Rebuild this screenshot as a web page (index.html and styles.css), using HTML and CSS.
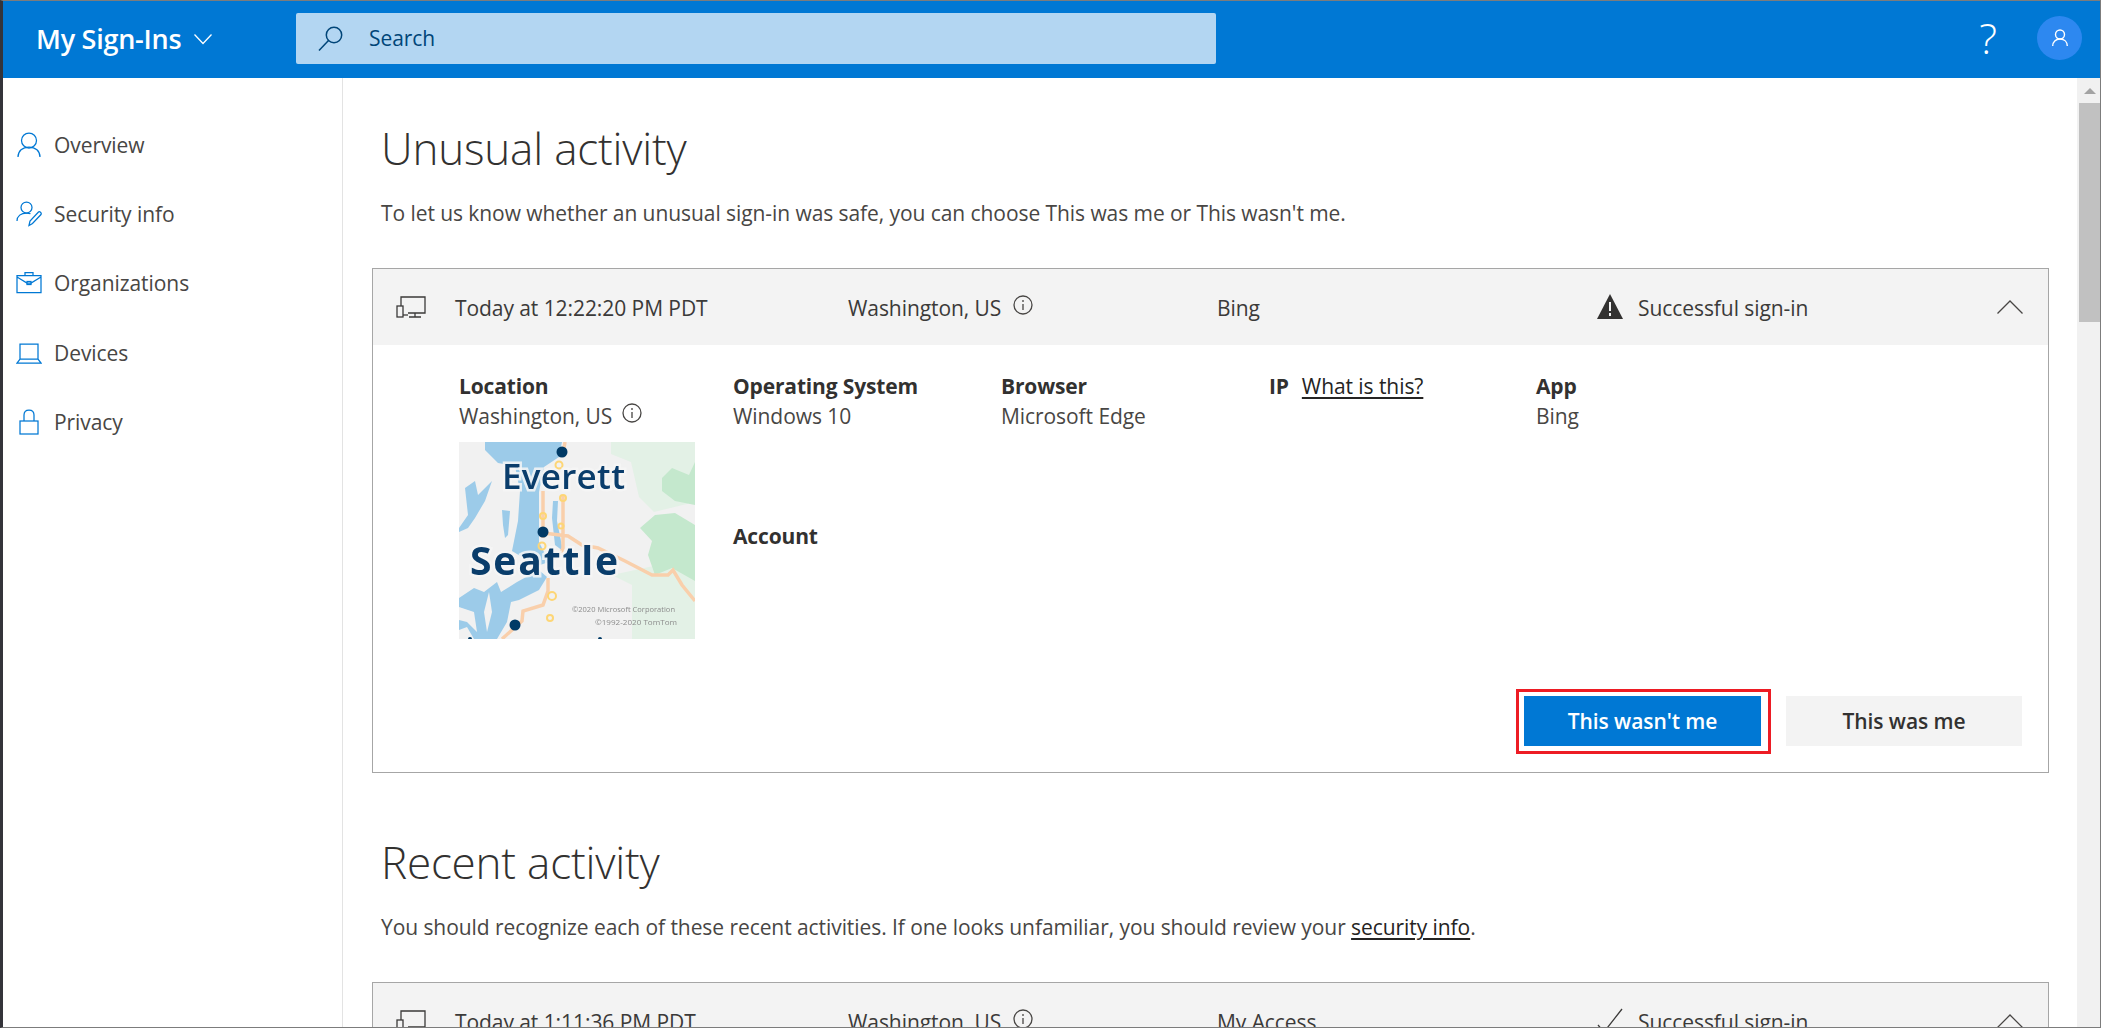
FILE: index.html
```html
<!DOCTYPE html>
<html lang="en">
<head>
<meta charset="utf-8">
<title>My Sign-Ins</title>
<link rel="stylesheet" href="styles.css">
</head>
<body>
<div class="frame">
  <header class="topbar">
    <div class="brand">My Sign-Ins
      <svg class="brand-chev" viewBox="0 0 18 11"><path d="M.5.5 9 9.500 17.500.5"/></svg>
    </div>
    <div class="search">
      <svg class="search-icon" viewBox="0 0 25 25"><circle cx="16" cy="9" r="7.700"/><path d="M10.500 14.500 1 24.500"/></svg>
      <span>Search</span>
    </div>
    <div class="help">?</div>
    <div class="avatar"><svg viewBox="0 0 16 18"><circle cx="8" cy="5.500" r="4.500"/><path d="M.7 17c0-4.200 3-7 7.300-7s7.300 2.800 7.300 7"/></svg></div>
  </header>
  <div class="body">
    <nav class="sidebar">
      <a class="nav-item"><svg viewBox="0 0 26 26"><circle cx="13" cy="8.500" r="7.500"/><path d="M2 25c0-6 4.500-10 11-10s11 4 11 10"/></svg>Overview</a>
      <a class="nav-item"><svg viewBox="0 0 26 26"><circle cx="10.500" cy="6.500" r="5.500"/><path d="M1 20c0-5 4-8 9.500-8 1.500 0 3 .3 4 .8"/><path d="M13 24.500l1-4.500 8.500-9c1-1 3.500 1 2.500 2.500l-8.500 9z"/></svg>Security info</a>
      <a class="nav-item"><svg viewBox="0 0 26 26"><path d="M1 5.500h24v17H1zM9 5.500v-3h8v3M1 7l10 6h4l10-6"/><rect x="11" y="11.500" width="4" height="3"/></svg>Organizations</a>
      <a class="nav-item"><svg viewBox="0 0 26 26"><path d="M4 19V4h18v15M1 23l3-4h18l3 4z"/></svg>Devices</a>
      <a class="nav-item"><svg viewBox="0 0 26 26"><rect x="4" y="12" width="18" height="13"/><path d="M8 12V6c0-3 2-5 5-5s5 2 5 5v6"/></svg>Privacy</a>
    </nav>
    <main class="content">
      <section class="block">
        <h1 class="title">Unusual activity</h1>
        <p class="lead">To let us know whether an unusual sign-in was safe, you can choose This was me or This wasn't me.</p>
        <article class="card">
          <div class="card-head">
            <svg class="device" viewBox="0 0 30 22"><path d="M5 10V1h24v16H12M19 17v4M13 21h12"/><rect x="1" y="10" width="6" height="11"/><path d="M7 19h5"/></svg>
            <span>Today at 12:22:20 PM PDT</span>
            <span class="loc">Washington, US <svg class="info" viewBox="0 0 20 20"><circle cx="10" cy="10" r="9"/><path d="M10 9v6M10 5v2"/></svg></span>
            <span>Bing</span>
            <span class="status"><svg class="warn" viewBox="0 0 26 25"><path d="M13 0 26 25H0z"/><path class="warn-mark" d="M13 8v9M13 19v3"/></svg>Successful sign-in</span>
            <svg class="chev" viewBox="0 0 26 14"><path d="M.5 13.500 13 1l12.500 12.500"/></svg>
          </div>
          <div class="details">
            <div class="loc-col">
              <div class="label">Location</div>
              <div class="value">Washington, US <svg class="info" viewBox="0 0 20 20"><circle cx="10" cy="10" r="9"/><path d="M10 9v6M10 5v2"/></svg></div>
              <svg class="map" viewBox="0 0 236 197">
                <rect width="236" height="197" fill="#f1f1f1"/>
                <g class="map-art">
                  <path fill="#e3f1e6" d="M152 0h84v60l-41 10-15-15-8-35-20-8zM153 133l20 10v54h63v-82z"/>
                  <path fill="#c4e8cd" d="M203 36l10-10 17 7 6-13v43l-20-4-13-10zM181 86l15-13 20-2 20 12v56l-23-13-17 7-7-20 4-14z"/>
                  <path fill="#9ccbe9" d="M26 0h77l-3 15-15 10-5 25v50l10 20-12 4-25-15 6-30 2-30-5-25-17-3-13-13zM0 86l9-13-3-27 10-7 3 14 14-14-7 20-10 17-7 10-9 4zM43 68l8 1-2 24-3 3-2-13zM94 59h5l-1 20 6 30-8-6-3-27zM0 156l15-10 10 4 13-10 4 10 16-10 22-12 8 7-8 13-20 10-8 2-4 20-10 17H15l-7-12-8 3z"/>
                  <path fill="#f1f1f1" d="M30 150l3 20-5 20-3-20zM0 165l15 5 3 20-10-10-8-2z"/>
                  <g fill="none" stroke="#f9cfab" stroke-width="3.500">
                    <path d="M106 0l-2 12M84 49v47M104 53v53l-3 7M84 91l25 3 14 9 16 3 27 13 27 14h16l5-5 9 15 13 16M89 136v13l-5 14-20 6-1 10-20 18"/>
                  </g>
                  <g fill="none" stroke="#fdd676" stroke-width="2"><circle cx="100" cy="23" r="3.500"/><circle cx="104" cy="56" r="3"/><circle cx="84" cy="74" r="3"/><circle cx="83" cy="104" r="3.500"/><circle cx="93" cy="154" r="4"/><circle cx="91" cy="176" r="3"/><circle cx="102" cy="84" r="2.500"/></g>
                  <g fill="#003a66"><circle cx="103" cy="10" r="5.500"/><circle cx="84" cy="90" r="5.500"/><circle cx="56" cy="183" r="5.500"/><circle cx="11" cy="197" r="2"/><circle cx="141" cy="197" r="2"/></g>
                  <text class="map-city" x="43" y="47" font-size="35" textLength="123" lengthAdjust="spacing">Everett</text>
                  <text class="map-city bold" x="11" y="133" font-size="39" textLength="148" lengthAdjust="spacing">Seattle</text>
                  <text class="map-copy" x="113" y="170" textLength="103" lengthAdjust="spacingAndGlyphs">©2020 Microsoft Corporation</text>
                  <text class="map-copy" x="136" y="183" textLength="82" lengthAdjust="spacingAndGlyphs">©1992-2020 TomTom</text>
                </g>
              </svg>
            </div>
            <div>
              <div class="label">Operating System</div>
              <div class="value">Windows 10</div>
              <div class="label account">Account</div>
            </div>
            <div>
              <div class="label">Browser</div>
              <div class="value">Microsoft Edge</div>
            </div>
            <div class="ip"><span class="label">IP</span><a class="link">What is this?</a></div>
            <div>
              <div class="label">App</div>
              <div class="value">Bing</div>
            </div>
          </div>
          <div class="actions">
            <button class="btn primary">This wasn't me</button>
            <button class="btn">This was me</button>
          </div>
        </article>
      </section>
      <section class="block">
        <h1 class="title">Recent activity</h1>
        <p class="lead">You should recognize each of these recent activities. If one looks unfamiliar, you should review your <a class="link">security info</a>.</p>
        <article class="card">
          <div class="card-head">
            <svg class="device" viewBox="0 0 30 22"><path d="M5 10V1h24v16H12M19 17v4M13 21h12"/><rect x="1" y="10" width="6" height="11"/><path d="M7 19h5"/></svg>
            <span>Today at 1:11:36 PM PDT</span>
            <span class="loc">Washington, US <svg class="info" viewBox="0 0 20 20"><circle cx="10" cy="10" r="9"/><path d="M10 9v6M10 5v2"/></svg></span>
            <span>My Access</span>
            <span class="status"><svg class="check" viewBox="0 0 26 25"><path d="M1 17l6 7L25 1"/></svg>Successful sign-in</span>
            <svg class="chev" viewBox="0 0 26 14"><path d="M.5 13.500 13 1l12.500 12.500"/></svg>
          </div>
        </article>
      </section>
    </main>
    <div class="scrollbar">
      <div class="scroll-up"></div>
      <div class="scroll-thumb"></div>
    </div>
  </div>
</div>
</body>
</html>
```
FILE: styles.css
```css
* { box-sizing: border-box; }
html, body { margin: 0; height: 100%; overflow: hidden; }
body {
  font-family: "Open Sans", "Noto Sans", sans-serif;
  font-size: 21px;
  letter-spacing: -0.07px;
  color: #323130;
  background: #fff;
}
.frame {
  height: 1028px;
  display: flex;
  flex-direction: column;
  border-top: 1px solid #7c7c7c;
  border-left: 3px solid #34343a;
  border-right: 1px solid #7c7c7c;
  border-bottom: 1px solid #7c7c7c;
  overflow: hidden;
}
svg { fill: none; stroke: currentColor; stroke-width: 1.3; flex: none; }

.topbar {
  flex: none;
  height: 77px;
  background: #0078d4;
  display: flex;
  align-items: center;
  color: #fff;
}
.brand {
  flex: none;
  width: 293px;
  padding: 0 0 3px 33px;
  font-size: 27px;
  font-weight: 600;
  letter-spacing: -0.25px;
  display: flex;
  align-items: center;
  gap: 13px;
}
.brand-chev { width: 18px; height: 11px; margin-top: 3px; }
.search {
  flex: none;
  width: 920px;
  height: 51px;
  margin-bottom: 2px;
  background: #b3d6f2;
  border-radius: 2px;
  display: flex;
  align-items: center;
  gap: 26px;
  padding: 0 0 2px 22px;
  color: #004578;
}
.search-icon { width: 25px; height: 25px; stroke-width: 1.5; margin-top: 2px; }
.help {
  margin-left: auto;
  margin-right: 40px;
  padding-bottom: 3px;
  font-size: 42px;
  font-weight: 300;
  letter-spacing: 0;
  line-height: 1;
}
.avatar {
  width: 45px;
  height: 44px;
  margin-bottom: 3px;
  border-radius: 50%;
  background: #2d88f0;
  margin-right: 18px;
  display: flex;
  align-items: center;
  justify-content: center;
}
.avatar svg { width: 16px; height: 18px; stroke-width: 1.4; }

.body { flex: 1; min-height: 0; display: flex; }
.sidebar {
  flex: none;
  width: 340px;
  border-right: 1px solid #e3e3e3;
  padding: 32px 0 0 13px;
}
.nav-item {
  height: 69.3px;
  display: flex;
  align-items: center;
  gap: 12px;
  color: #484644;
}
.nav-item svg { width: 26px; height: 26px; color: #0078d4; stroke-width: 1.25; }

.content { flex: 1; min-width: 0; padding: 40px 28px 0 29px; overflow: hidden; }
.block { margin-bottom: 59px; }
.title {
  margin: 0 0 20px 9px;
  font-size: 44px;
  line-height: 60px;
  font-weight: 300;
  letter-spacing: -0.2px;
  color: #323130;
}
.lead { margin: 0 0 40px 9px; line-height: 30px; color: #484644; }
.link { color: #252423; text-decoration: underline; text-underline-offset: 3px; }

.card { border: 1px solid #a6a6a6; background: #fff; }
.card-head {
  height: 76px;
  background: #f3f3f3;
  padding-left: 23px;
  display: grid;
  grid-template-columns: 59px 393px 369px 380px 400px 26px;
  align-items: center;
  color: #3b3a39;
}
.card-head > span { padding-top: 2px; }
.device { width: 30px; height: 22px; }
.loc { display: flex; align-items: center; gap: 4px; }
.info { width: 20px; height: 20px; margin: -6px 0 0 8px; color: #484644; }
.status { display: flex; align-items: center; gap: 15px; padding-top: 4px; }
.warn { width: 26px; height: 25px; fill: #323130; stroke: none; margin-top: -3px; }
.warn-mark { stroke: #f3f3f3; stroke-width: 2; }
.check { width: 26px; height: 25px; margin-top: -3px; }
.chev { width: 26px; height: 14px; color: #484644; }

.details {
  padding: 26px 0 0 86px;
  display: grid;
  grid-template-columns: 274px 268px 268px 267px 1fr;
}
.label { font-weight: 700; line-height: 30px; color: #323130; letter-spacing: -0.15px; }
.value { line-height: 30px; color: #484644; display: flex; align-items: center; }
.value .info { margin-left: 10px; }
.account { margin-top: 90px; }
.ip { display: flex; gap: 13px; line-height: 30px; }
.map { display: block; width: 236px; height: 197px; margin-top: 11px; stroke: none; }
.map-art { filter: blur(0.6px); }
.map-city {
  font-family: "Open Sans", sans-serif;
  font-weight: 600;
  letter-spacing: 0;
  fill: #0a3d6b;
  stroke: #f6f6f6;
  stroke-width: 5;
  stroke-opacity: .85;
  paint-order: stroke;
}
.bold { font-weight: 700; }
.map-copy { font-size: 8px; fill: #8c8c8c; letter-spacing: 0; }

.actions {
  margin-top: 57px;
  padding: 0 26px 26px 0;
  display: flex;
  justify-content: flex-end;
  gap: 25px;
}
.btn {
  position: relative;
  width: 236px;
  height: 50px;
  border: 0;
  background: #f3f3f3;
  font: inherit;
  letter-spacing: inherit;
  font-weight: 600;
  color: #323130;
  padding: 0;
}
.primary { width: 237px; background: #0078d4; color: #fff; }
.primary::after {
  content: "";
  position: absolute;
  inset: -7px -10px -8px -8px;
  border: 3px solid #ed1c24;
}

.scrollbar { flex: none; width: 23px; background: #f1f1f1; display: flex; flex-direction: column; }
.scroll-up {
  height: 25px;
  position: relative;
}
.scroll-up::after {
  content: "";
  position: absolute;
  left: 7px;
  top: 10px;
  border-left: 6px solid transparent;
  border-right: 6px solid transparent;
  border-bottom: 6px solid #a3a3a3;
}
.scroll-thumb { margin-left: 2px; height: 219px; background: #c1c1c1; }
```
